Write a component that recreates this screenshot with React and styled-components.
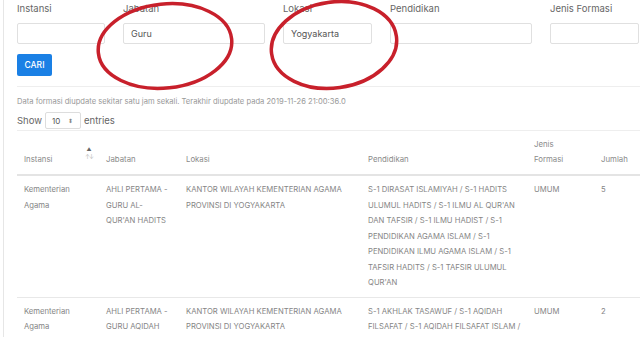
import React from "react";
import styled, { createGlobalStyle } from "styled-components";

const Global = createGlobalStyle`
  html, body { margin: 0; padding: 0; background: #fff; }
  body { font-family: Inter, "Noto Sans", sans-serif; overflow: hidden; }
  * { box-sizing: border-box; }
`;

const Page = styled.div`
  position: relative;
  width: 640px;
  height: 337px;
  overflow: hidden;
`;

const Card = styled.div`
  margin-left: 3px;
  border-left: 1px solid #e6e6e6;
  padding-left: 13px;
  height: 337px;
`;

const FilterRow = styled.div`
  display: flex;
  gap: 18px;
`;

const Field = styled.div`
  display: flex;
  flex-direction: column;
  width: ${(p) => p.$w}px;
  flex: none;
`;

const Label = styled.div`
  margin-top: 1px;
  height: 16px;
  line-height: 16px;
  font-size: 9.5px;
  color: #666;
  white-space: nowrap;
`;

const Input = styled.div`
  margin-top: 6px;
  height: 21px;
  border: 1px solid #e0e0e0;
  border-radius: 2px;
  padding-left: 7px;
  font-size: 9px;
  line-height: 19px;
  color: #555;
`;

const Button = styled.div`
  margin-top: 10px;
  width: 35px;
  height: 22px;
  background: #1a80e5;
  border-radius: 2px;
  color: #fff;
  font-size: 8.5px;
  font-weight: 500;
  display: flex;
  align-items: center;
  justify-content: center;
`;

const Rule = styled.div`
  margin-top: 10px;
  height: 1px;
  background: #eee;
`;

const Info = styled.div`
  margin-top: 8px;
  height: 14px;
  line-height: 14px;
  font-size: 7.6px;
  color: #999;
  white-space: nowrap;
`;

const ShowRow = styled.div`
  margin-top: 3px;
  height: 17px;
  display: flex;
  align-items: center;
  gap: 3px;
  font-size: 9.5px;
  color: #666;
`;

const Select = styled.div`
  width: 36px;
  height: 17px;
  border: 1px solid #ddd;
  border-radius: 2px;
  display: flex;
  align-items: center;
  justify-content: space-between;
  padding: 0 7px 0 6px;
  font-size: 8px;
  color: #555;
`;

const Caret = styled.span`
  font-size: 6px;
  color: #888;
`;

const Table = styled.table`
  margin-top: 1px;
  width: 623px;
  table-layout: fixed;
  border-collapse: collapse;
  font-size: 7.7px;
  color: #858585;
`;

const Th = styled.th`
  position: relative;
  text-align: left;
  font-weight: 400;
  vertical-align: bottom;
  padding: 6px 7px 7px;
  line-height: 15px;
  border-top: 1px solid #eee;
  border-bottom: 2px solid #e4e4e4;
  color: #8a8a8a;
  font-size: 7.8px;
`;

const Td = styled.td`
  vertical-align: top;
  padding: 6px 7px 6px;
  line-height: 15.5px;
  border-bottom: 1px solid #e8e8e8;
  white-space: nowrap;
`;

const SortIcon = styled.span`
  position: absolute;
  right: 6px;
  top: 14px;
  display: flex;
  flex-direction: column;
  align-items: center;
  font-size: 5px;
  line-height: 8px;
  color: #666;
`;

const SortDim = styled.span`
  color: #bbb;
  font-size: 6px;
  letter-spacing: -1px;
`;

const Annotations = styled.svg`
  position: absolute;
  left: 0;
  top: 0;
  pointer-events: none;
`;

const Lines = ({ lines }) =>
  lines.map((l, i) => (
    <React.Fragment key={i}>
      {i > 0 && <br />}
      {l}
    </React.Fragment>
  ));

const fields = [
  { label: "Instansi", w: 88, value: "" },
  { label: "Jabatan", w: 142, value: "Guru" },
  { label: "Lokasi", w: 89, value: "Yogyakarta" },
  { label: "Pendidikan", w: 142, value: "" },
  { label: "Jenis Formasi", w: 89, value: "" },
];

const rows = [
  {
    inst: ["Kementerian", "Agama"],
    jab: ["AHLI PERTAMA -", "GURU AL-", "QUR'AN HADITS"],
    lok: ["KANTOR WILAYAH KEMENTERIAN AGAMA", "PROVINSI DI YOGYAKARTA"],
    pend: [
      "S-1 DIRASAT ISLAMIYAH / S-1 HADITS",
      "ULUMUL HADITS / S-1 ILMU AL QUR'AN",
      "DAN TAFSIR / S-1 ILMU HADIST / S-1",
      "PENDIDIKAN AGAMA ISLAM / S-1",
      "PENDIDIKAN ILMU AGAMA ISLAM / S-1",
      "TAFSIR HADITS / S-1 TAFSIR ULUMUL",
      "QUR'AN",
    ],
    jenis: "UMUM",
    jml: "5",
  },
  {
    inst: ["Kementerian", "Agama"],
    jab: ["AHLI PERTAMA -", "GURU AQIDAH"],
    lok: ["KANTOR WILAYAH KEMENTERIAN AGAMA", "PROVINSI DI YOGYAKARTA"],
    pend: [
      "S-1 AKHLAK TASAWUF / S-1 AQIDAH",
      "FILSAFAT / S-1 AQIDAH FILSAFAT ISLAM /",
    ],
    jenis: "UMUM",
    jml: "2",
  },
];

export default function App() {
  return (
    <Page>
      <Global />
      <Card>
        <FilterRow>
          {fields.map((f) => (
            <Field key={f.label} $w={f.w}>
              <Label>{f.label}</Label>
              <Input>{f.value}</Input>
            </Field>
          ))}
        </FilterRow>
        <Button>CARI</Button>
        <Rule />
        <Info>
          Data formasi diupdate sekitar satu jam sekali. Terakhir diupdate pada
          2019-11-26 21:00:36.0
        </Info>
        <ShowRow>
          <span>Show</span>
          <Select>
            <span>10</span>
            <Caret>⬍</Caret>
          </Select>
          <span>entries</span>
        </ShowRow>
        <Table>
          <colgroup>
            <col style={{ width: 82 }} />
            <col style={{ width: 80 }} />
            <col style={{ width: 182 }} />
            <col style={{ width: 166 }} />
            <col style={{ width: 67 }} />
            <col />
          </colgroup>
          <thead>
            <tr>
              <Th>
                Instansi
                <SortIcon>
                  <span>▲</span>
                  <SortDim>↑↓</SortDim>
                </SortIcon>
              </Th>
              <Th>Jabatan</Th>
              <Th>Lokasi</Th>
              <Th>Pendidikan</Th>
              <Th>
                Jenis
                <br />
                Formasi
              </Th>
              <Th>Jumlah</Th>
            </tr>
          </thead>
          <tbody>
            {rows.map((r, i) => (
              <tr key={i}>
                <Td><Lines lines={r.inst} /></Td>
                <Td><Lines lines={r.jab} /></Td>
                <Td><Lines lines={r.lok} /></Td>
                <Td><Lines lines={r.pend} /></Td>
                <Td>{r.jenis}</Td>
                <Td>{r.jml}</Td>
              </tr>
            ))}
          </tbody>
        </Table>
      </Card>
      <Annotations width="640" height="337" viewBox="0 0 640 337">
        <ellipse
          cx="165"
          cy="46"
          rx="67"
          ry="42"
          fill="none"
          stroke="#c8202b"
          strokeWidth="3.5"
          transform="rotate(-6 165 46)"
        />
        <ellipse
          cx="334"
          cy="45"
          rx="63"
          ry="43"
          fill="none"
          stroke="#c8202b"
          strokeWidth="3.5"
          transform="rotate(-8 334 45)"
        />
      </Annotations>
    </Page>
  );
}
